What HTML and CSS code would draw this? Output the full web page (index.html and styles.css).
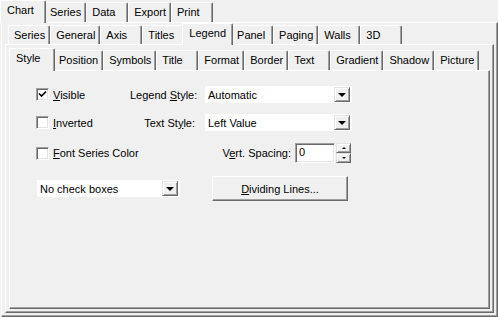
FILE: index.html
```html
<!DOCTYPE html>
<html lang="en">
<head>
  <meta charset="UTF-8">
  <title>Chart Editor - Legend</title>
  <link rel="stylesheet" href="styles.css">
</head>
<body>
  <div class="dialog">
    <div class="tabrow top">
      <span class="tab active">Chart</span>
      <span class="tab">Series</span>
      <span class="tab">Data</span>
      <span class="tab">Export</span>
      <span class="tab">Print</span>
    </div>
    <div class="panel">
      <div class="tabrow mid">
        <span class="tab">Series</span>
        <span class="tab">General</span>
        <span class="tab">Axis</span>
        <span class="tab">Titles</span>
        <span class="tab active">Legend</span>
        <span class="tab">Panel</span>
        <span class="tab">Paging</span>
        <span class="tab">Walls</span>
        <span class="tab">3D</span>
      </div>
      <div class="panel inner">
        <div class="tabrow low">
          <span class="tab active">Style</span>
          <span class="tab">Position</span>
          <span class="tab">Symbols</span>
          <span class="tab">Title</span>
          <span class="tab">Format</span>
          <span class="tab">Border</span>
          <span class="tab">Text</span>
          <span class="tab">Gradient</span>
          <span class="tab">Shadow</span>
          <span class="tab">Picture</span>
        </div>
        <div class="panel page">
          <div class="row row-a">
            <label class="check">
              <span class="box"><svg width="9" height="9" viewBox="0 0 9 9"><path d="M1 3.5 L3.5 6 L8 1.5" fill="none" stroke="#000" stroke-width="1.6"/></svg></span>
              <span><u>V</u>isible</span>
            </label>
            <span class="caption">Legend <u>S</u>tyle:</span>
            <div class="combo wide"><span class="value">Automatic</span><span class="drop"><i></i></span></div>
          </div>
          <div class="row row-b">
            <label class="check">
              <span class="box"></span>
              <span><u>I</u>nverted</span>
            </label>
            <span class="caption">Text St<u>y</u>le:</span>
            <div class="combo wide"><span class="value">Left Value</span><span class="drop"><i></i></span></div>
          </div>
          <div class="row row-c">
            <label class="check">
              <span class="box"></span>
              <span><u>F</u>ont Series Color</span>
            </label>
            <span class="caption long">V<u>e</u>rt. Spacing:</span>
            <div class="edit">0</div>
            <div class="spin">
              <span class="spin-btn"><i class="up"></i></span>
              <span class="spin-btn"><i class="down"></i></span>
            </div>
          </div>
          <div class="row row-d">
            <div class="combo narrow"><span class="value">No check boxes</span><span class="drop"><i></i></span></div>
            <button class="btn"><u>D</u>ividing Lines...</button>
          </div>
        </div>
      </div>
    </div>
  </div>
</body>
</html>
```

FILE: styles.css
```css
body {
  margin: 0;
  background: #f0f0f0;
  font-family: "Liberation Sans", Arial, sans-serif;
  font-size: 11px;
  color: #000;
}
.dialog {
  width: 498px;
  height: 317px;
  box-sizing: border-box;
  padding-left: 1px;
  display: flex;
  flex-direction: column;
}

/* tab strips */
.tabrow {
  display: flex;
  align-items: flex-end;
  flex: none;
  height: 22px;
  padding-left: 1px;
}
.tabrow.mid {
  height: 21px;
  padding-left: 3px;
}
.tabrow.low {
  padding-left: 2px;
}
.tab {
  box-sizing: border-box;
  height: 20px;
  min-width: 42px;
  padding: 0 4px 0 5px;
  line-height: 18px;
  border: 1px solid;
  border-color: #fff #696969 transparent #fff;
  border-bottom: none;
  border-radius: 2px 2px 0 0;
  box-shadow: inset -1px 0 #a0a0a0;
  white-space: nowrap;
  background: #f0f0f0;
}
.tabrow.mid .tab {
  height: 19px;
}
.tab.active {
  position: relative;
  z-index: 1;
  height: 23px;
  min-width: 46px;
  margin: 0 -2px -1px;
  padding: 0 6px 0 6px;
  line-height: 19px;
}
.tabrow.mid .tab.active {
  height: 22px;
}

/* sheets */
.panel {
  flex: 1;
  display: flex;
  flex-direction: column;
  border: 1px solid;
  border-color: #fff #696969 #696969 #fff;
  box-shadow: inset -1px -1px #a0a0a0;
  padding: 0 3px 3px 3px;
}
.panel.inner {
  padding-top: 3px;
}
.panel.page {
  padding: 15px 0 0 26px;
}

/* legend style page */
.row {
  display: flex;
  align-items: center;
}
.row-a,
.row-b {
  height: 17px;
}
.row-b {
  margin-top: 11px;
}
.row-c {
  height: 20px;
  margin-top: 12px;
}
.row-d {
  height: 25px;
  margin-top: 13px;
  padding-left: 1px;
}
.check {
  display: flex;
  align-items: center;
  gap: 4px;
  width: 94px;
  flex: none;
  white-space: nowrap;
}
.box {
  box-sizing: border-box;
  flex: none;
  width: 13px;
  height: 13px;
  background: #fff;
  border: 1px solid;
  border-color: #a0a0a0 #fff #fff #a0a0a0;
  box-shadow: inset 1px 1px #696969, inset -1px -1px #e3e3e3;
  display: flex;
  align-items: center;
  justify-content: center;
}
.caption {
  width: 65px;
  text-align: right;
  margin-right: 10px;
  white-space: nowrap;
}
.caption.long {
  width: 161px;
  margin-right: 4px;
}
.combo {
  box-sizing: border-box;
  height: 17px;
  background: #fff;
  display: flex;
  align-items: center;
  justify-content: space-between;
  padding: 0 2px 0 3px;
}
.combo.wide {
  width: 147px;
}
.combo.narrow {
  width: 143px;
  margin-right: 32px;
}
.drop {
  box-sizing: border-box;
  width: 16px;
  height: 15px;
  background: #f0f0f0;
  border: 1px solid;
  border-color: #e3e3e3 #696969 #696969 #e3e3e3;
  box-shadow: inset 1px 1px #fff, inset -1px -1px #a0a0a0;
  display: flex;
  align-items: center;
  justify-content: center;
}
.drop i {
  width: 0;
  height: 0;
  border-left: 4px solid transparent;
  border-right: 4px solid transparent;
  border-top: 4px solid #000;
}
.edit {
  box-sizing: border-box;
  width: 40px;
  height: 20px;
  background: #fff;
  border: 1px solid;
  border-color: #a0a0a0 #fff #fff #a0a0a0;
  box-shadow: inset 1px 1px #696969, inset -1px -1px #e3e3e3;
  padding: 2px 0 0 3px;
}
.spin {
  display: flex;
  flex-direction: column;
  margin-left: 1px;
  height: 20px;
}
.spin-btn {
  box-sizing: border-box;
  width: 15px;
  height: 10px;
  border: 1px solid;
  border-color: #e3e3e3 #696969 #696969 #e3e3e3;
  box-shadow: inset 1px 1px #fff, inset -1px -1px #a0a0a0;
  display: flex;
  align-items: center;
  justify-content: center;
}
.spin-btn i {
  width: 0;
  height: 0;
  border-left: 2px solid transparent;
  border-right: 2px solid transparent;
}
.spin-btn i.up {
  border-bottom: 2px solid #000;
}
.spin-btn i.down {
  border-top: 2px solid #000;
}
.btn {
  box-sizing: border-box;
  width: 136px;
  height: 25px;
  font: inherit;
  color: #000;
  background: #f0f0f0;
  border: 1px solid;
  border-color: #fff #696969 #696969 #fff;
  box-shadow: inset -1px -1px #a0a0a0;
  padding: 0;
}
```
